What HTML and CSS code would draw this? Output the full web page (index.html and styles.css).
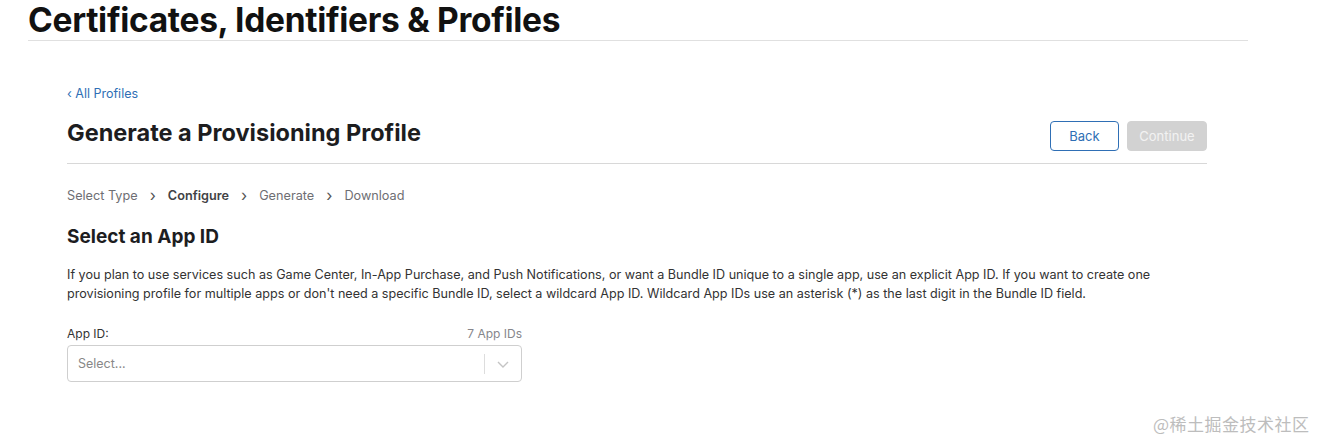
FILE: index.html
```html
<!DOCTYPE html>
<html>
<head>
<meta charset="utf-8">
<link rel="stylesheet" href="styles.css">
</head>
<body>
<div class="page">
  <header class="top">
    <h1 class="top-title">Certificates, Identifiers &amp; Profiles</h1>
  </header>
  <main class="content">
    <a class="back-link" href="#">‹ All Profiles</a>
    <div class="head-row">
      <h2 class="page-title">Generate a Provisioning Profile</h2>
      <div class="actions">
        <button class="btn btn-back">Back</button>
        <button class="btn btn-continue">Continue</button>
      </div>
    </div>
    <nav class="steps">
      <span class="step">Select Type</span>
      <span class="sep">›</span>
      <span class="step current">Configure</span>
      <span class="sep">›</span>
      <span class="step">Generate</span>
      <span class="sep">›</span>
      <span class="step">Download</span>
    </nav>
    <h3 class="section-title">Select an App ID</h3>
    <p class="desc">If you plan to use services such as Game Center, In-App Purchase, and Push Notifications, or want a Bundle ID unique to a single app, use an explicit App ID. If you want to create one provisioning profile for multiple apps or don't need a specific Bundle ID, select a wildcard App ID. Wildcard App IDs use an asterisk (*) as the last digit in the Bundle ID field.</p>
    <div class="field">
      <div class="field-head">
        <span class="field-label">App ID:</span>
        <span class="field-count">7 App IDs</span>
      </div>
      <div class="select">
        <span class="placeholder">Select...</span>
        <span class="divider"></span>
        <span class="chev">
          <svg width="14" height="14" viewBox="0 0 14 14"><path d="M2 5 L7 10 L12 5" fill="none" stroke="#c4c4c4" stroke-width="1.4"/></svg>
        </span>
      </div>
    </div>
  </main>
  <div class="watermark">@稀土掘金技术社区</div>
</div>
</body>
</html>
```
FILE: styles.css
```css
* { box-sizing: border-box; }
html, body { margin: 0; padding: 0; background: #fff; }
body {
  font-family: Inter, "Noto Sans", "Liberation Sans", sans-serif;
  color: #1d1d1f;
  width: 1329px;
  height: 447px;
  overflow: hidden;
}
.page { position: relative; height: 447px; }
.top {
  margin: 0 81px 0 28px;
  border-bottom: 1px solid #e0e0e0;
  height: 41px;
}
.top-title {
  margin: 0;
  padding-top: 2px;
  font-size: 33.5px;
  font-weight: 700;
  letter-spacing: -0.3px;
  line-height: 36px;
  color: #111;
}
.content {
  margin: 0 122px 0 67px;
  padding-top: 41px;
}
.back-link {
  display: inline-block;
  font-size: 12.5px;
  color: #2f6fb5;
  text-decoration: none;
  line-height: 16px;
}
.head-row {
  display: flex;
  justify-content: space-between;
  align-items: flex-end;
  margin-top: 16px;
  padding-bottom: 12px;
  border-bottom: 1px solid #d8d8d8;
}
.page-title {
  margin: 0;
  font-size: 23.5px;
  font-weight: 700;
  line-height: 30px;
  color: #1d1d1f;
  padding-bottom: 3px;
}
.actions { display: flex; gap: 8px; }
.btn {
  font-family: inherit;
  font-size: 13px;
  height: 30px;
  border-radius: 4px;
  padding: 0;
}
.btn-back {
  width: 69px;
  background: #fff;
  border: 1px solid #2f6fb5;
  color: #2f6fb5;
}
.btn-continue {
  width: 80px;
  background: #d2d2d2;
  border: 1px solid #d2d2d2;
  color: #f2f2f2;
}
.steps {
  display: flex;
  align-items: center;
  gap: 12px;
  margin-top: 22px;
  font-size: 12.7px;
  color: #6e6e73;
  line-height: 18px;
}
.steps .current { font-weight: 600; color: #424245; }
.steps .sep { font-size: 16px; color: #555; padding: 0 0 2px; }
.section-title {
  margin: 18px 0 0;
  font-size: 19px;
  font-weight: 700;
  line-height: 26px;
  color: #1d1d1f;
}
.desc {
  margin: 15px 0 0;
  font-size: 12.6px;
  line-height: 19px;
  color: #333;
  max-width: 1140px;
}
.field { width: 455px; margin-top: 23px; }
.field-head {
  display: flex;
  justify-content: space-between;
  align-items: flex-end;
  font-size: 12px;
  line-height: 16px;
}
.field-label { color: #333; }
.field-count { color: #86868b; font-size: 12px; }
.select {
  margin-top: 3px;
  height: 37px;
  border: 1px solid #cfcfcf;
  border-radius: 4px;
  display: flex;
  align-items: center;
}
.placeholder {
  flex: 1;
  padding-left: 10px;
  font-size: 12.5px;
  color: #888;
}
.divider { width: 1px; height: 20px; background: #ddd; }
.chev { width: 36px; display: flex; justify-content: center; align-items: center; }
.watermark {
  position: absolute;
  left: 1153px;
  top: 411px;
  font-size: 17px;
  color: #bdbdbd;
  font-family: "Noto Sans CJK SC", sans-serif;
  letter-spacing: 0.5px;
}
```
